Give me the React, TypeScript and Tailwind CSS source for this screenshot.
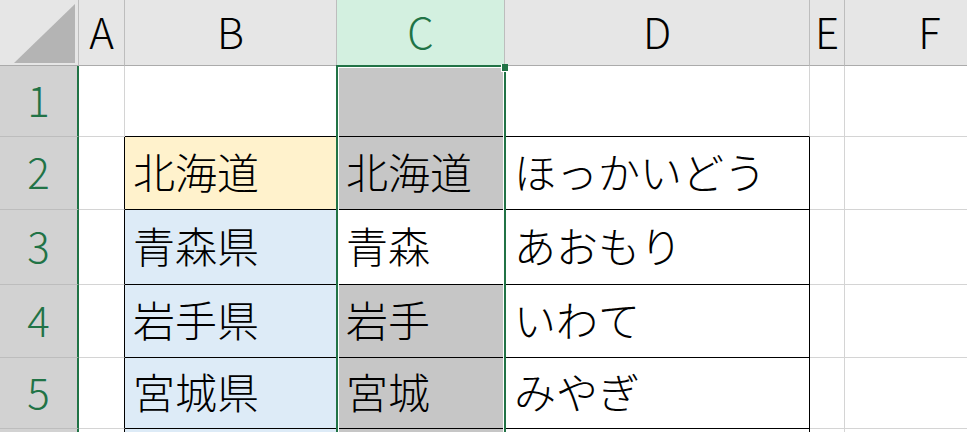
import React from "react";

type Row = {
  n: number;
  b: string;
  c: string;
  d: string;
  bFill: "none" | "yellow" | "blue";
  cGray: boolean;
  table: boolean;
};

const rows: Row[] = [
  { n: 1, b: "", c: "", d: "", bFill: "none", cGray: true, table: false },
  { n: 2, b: "北海道", c: "北海道", d: "ほっかいどう", bFill: "yellow", cGray: true, table: true },
  { n: 3, b: "青森県", c: "青森", d: "あおもり", bFill: "blue", cGray: false, table: true },
  { n: 4, b: "岩手県", c: "岩手", d: "いわて", bFill: "blue", cGray: true, table: true },
  { n: 5, b: "宮城県", c: "宮城", d: "みやぎ", bFill: "blue", cGray: true, table: true },
  { n: 6, b: "", c: "", d: "", bFill: "blue", cGray: true, table: true },
];

const letters = ["A", "B", "C", "D", "E", "F"];

export default function App() {
  return (
    <div className="relative w-[967px] h-[432px] overflow-hidden bg-white font-['Noto_Sans_CJK_JP',sans-serif] text-[42px] font-light leading-none text-black">
      <div className="grid grid-cols-[79px_46px_212px_168px_305px_35px_170px] grid-rows-[66px_71px_73px_75px_73px_71px_60px]">
        {/* corner */}
        <div className="bg-[#e6e6e6] border-r border-b border-r-[#bdbdbd] border-b-[#ababab]">
          <svg width="78" height="65" viewBox="0 0 78 65">
            <polygon points="14,63 75,4 75,63" fill="#b4b4b4" />
          </svg>
        </div>

        {/* column headers */}
        {letters.map((l) =>
          l === "C" ? (
            <div
              key={l}
              className="flex items-center justify-center pb-1 bg-[#d3f0e0] text-[#217346] border-r border-b border-r-[#bdbdbd] border-b-[#217346]"
            >
              {l}
            </div>
          ) : (
            <div
              key={l}
              className="flex items-center justify-center pb-1 bg-[#e6e6e6] border-r border-b border-r-[#bdbdbd] border-b-[#ababab]"
            >
              {l}
            </div>
          )
        )}

        {rows.map((r) => (
          <React.Fragment key={r.n}>
            {/* row header */}
            <div className="flex items-center justify-center pb-1 bg-[#d2d2d2] text-[#217346] border-b border-b-[#bdbdbd] border-r-2 border-r-[#217346]">
              {r.table && r.n > 5 ? "" : r.n}
            </div>

            {/* A */}
            <div
              className={
                r.table
                  ? "border-r border-b border-r-black border-b-[#d4d4d4]"
                  : "border-r border-b border-r-[#d4d4d4] border-b-[#d4d4d4]"
              }
            />

            {/* B */}
            <div
              className={
                r.bFill === "yellow"
                  ? "flex items-center pl-2 pb-1 bg-[#fff2cc] border-r border-b border-black"
                  : r.bFill === "blue"
                  ? "flex items-center pl-2 pb-1 bg-[#ddebf7] border-r border-b border-black"
                  : "flex items-center pl-2 pb-1 border-r border-b border-r-[#d4d4d4] border-b-black"
              }
            >
              {r.b}
            </div>

            {/* C */}
            <div
              className={
                r.cGray
                  ? "flex items-center pl-[9px] pb-1 bg-[#c6c6c6] border-r border-b border-black"
                  : "flex items-center pl-[9px] pb-1 bg-white border-r border-b border-black"
              }
            >
              {r.c}
            </div>

            {/* D */}
            <div
              className={
                r.table
                  ? "flex items-center pl-[9px] pb-1 border-r border-b border-black"
                  : "flex items-center pl-[9px] pb-1 border-r border-b border-r-[#d4d4d4] border-b-black"
              }
            >
              {r.d}
            </div>

            {/* E, F */}
            <div className="border-r border-b border-[#d4d4d4]" />
            <div className="border-r border-b border-[#d4d4d4]" />
          </React.Fragment>
        ))}
      </div>

      {/* selected range outline */}
      <div className="absolute left-[336px] top-[65px] w-[170px] h-[400px] border-2 border-[#217346] shadow-[inset_0_0_0_1px_#ffffff]" />
      <div className="absolute left-[501px] top-[64px] w-[7px] h-[8px] bg-[#217346] border-l border-b border-white" />
    </div>
  );
}
